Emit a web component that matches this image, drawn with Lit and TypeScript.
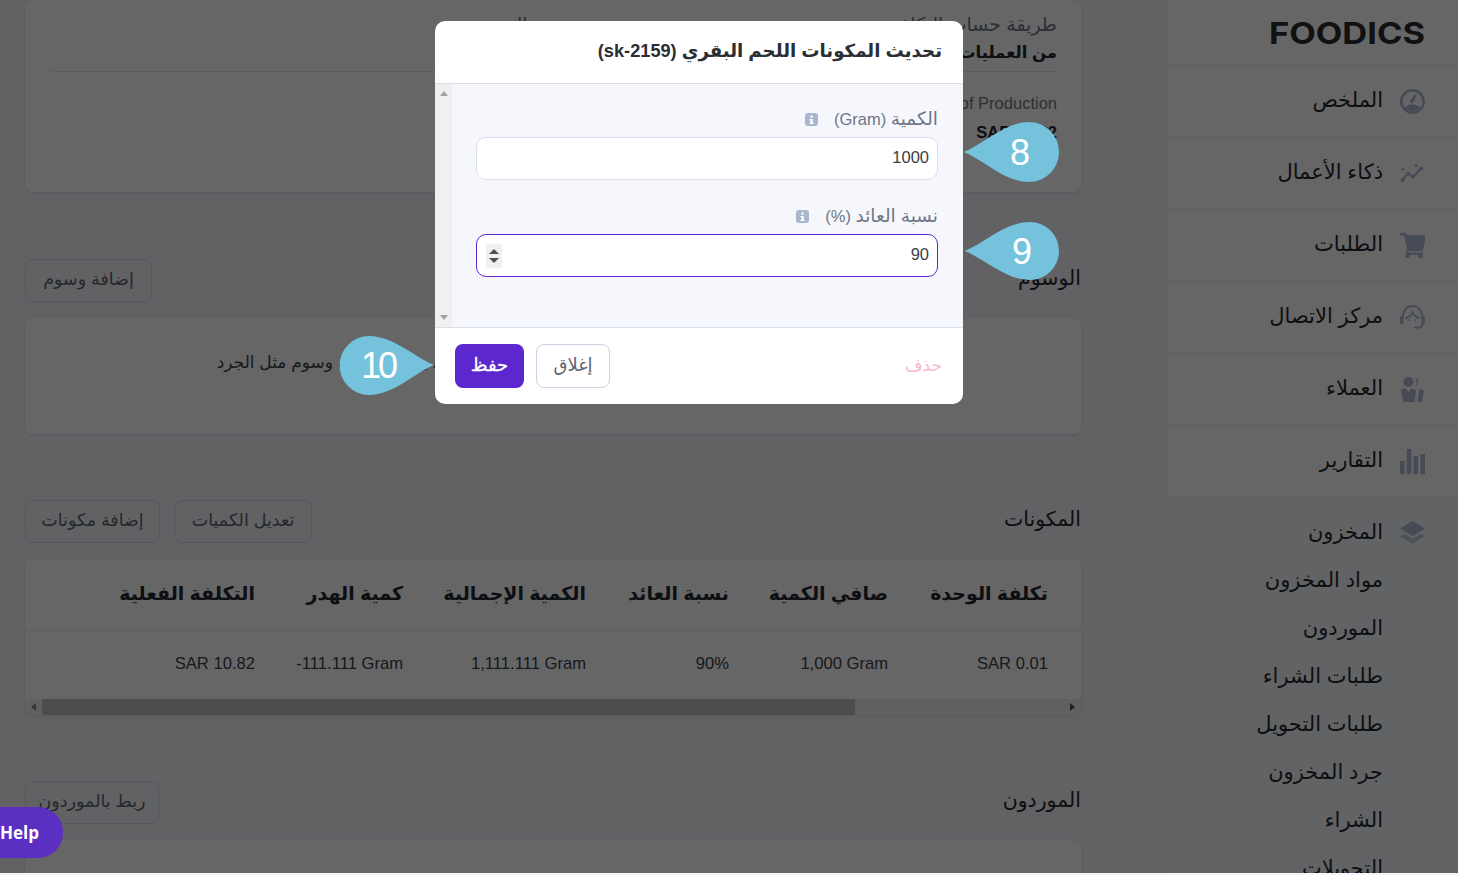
import { LitElement, html, css, svg } from 'lit';
import { customElement } from 'lit/decorators.js';

const ICONS = {
  gauge: svg`<circle cx="12.5" cy="12.5" r="11.2" fill="none" stroke="currentColor" stroke-width="2.6"/><path d="M5 18.5C8 14.5 17 14.5 20 18.5A9.5 9.5 0 0 1 5 18.5z"/><path d="M11 10.5l4.200-5 1.300.8-2.700 6a1.900 1.900 0 1 1-2.800-1.800z"/>`,
  trend: svg`<path d="M2.5 19l5.500-6.500 5 3.500 8.500-9" fill="none" stroke="currentColor" stroke-width="2.2" stroke-linecap="round" stroke-linejoin="round"/><circle cx="2.5" cy="19" r="2"/><circle cx="8" cy="12.5" r="1.8"/><circle cx="13" cy="16" r="1.8"/><circle cx="21.5" cy="7.5" r="2"/><path d="M3 6l.7 1.500 1.500.7-1.500.7L3 10.400l-.7-1.500-1.500-.7 1.500-.7zM16 2l.8 1.700 1.700.8-1.700.8-.8 1.700-.8-1.700-1.700-.8 1.700-.8z"/>`,
  cart: svg`<path d="M25 2H6.500L6 0H0v2.500h4l3.500 14.200A3 3 0 0 0 8 22h15v-2.500H8.500a.6.6 0 0 1 0-1.200H22.500l2.500-10z"/><circle cx="7.5" cy="23" r="2.2"/><circle cx="20.5" cy="23" r="2.2"/>`,
  agent: svg`<g fill="none" stroke="currentColor" stroke-width="2" stroke-linecap="round"><path d="M3 12v-1.500a9.500 9.500 0 0 1 19 0V12"/><path d="M6.500 13C9.500 12 11.500 9.500 12.500 7 13.500 9.500 15.500 12 18.500 13"/><path d="M22.500 18c0 2.800-1.800 4.500-4 4.500H15"/></g><rect x="0" y="11" width="3.5" height="8" rx="1.6"/><rect x="21.5" y="11" width="3.5" height="8" rx="1.6"/><circle cx="9.5" cy="15" r="1"/><circle cx="15.5" cy="15" r="1"/>`,
  users: svg`<circle cx="8.5" cy="5" r="5"/><path d="M15 .3a5 5 0 0 1 0 9.400a7 7 0 0 0 0-9.400z"/><path d="M1 13c1.500-1 3-1.500 4.500-1.500L8.500 15l3-3.500c1.500 0 3 .5 4.500 1.500l-1.500 12h-11z"/><path d="M18 12c2 0 4 .5 6 1.500L22 25h-4.500L19 13z"/>`,
  bars: svg`<rect x="0" y="12" width="4.5" height="13"/><rect x="6.8" y="0" width="4.5" height="25"/><rect x="13.5" y="7" width="4.5" height="18"/><rect x="20.5" y="5" width="4.5" height="20"/>`,
  layers: svg`<path d="M12.500 0L25 7.500 12.500 15 0 7.500z"/><path d="M4 12.700l8.500 5 8.500-5 4 2.500-12.500 7.500L0 15.200z" opacity=".75"/>`,
} as const;

const NAV: [string, keyof typeof ICONS][] = [
  ['الملخص', 'gauge'],
  ['ذكاء الأعمال', 'trend'],
  ['الطلبات', 'cart'],
  ['مركز الاتصال', 'agent'],
  ['العملاء', 'users'],
  ['التقارير', 'bars'],
];

const STOCK = ['مواد المخزون', 'الموردون', 'طلبات الشراء', 'طلبات التحويل', 'جرد المخزون', 'الشراء', 'التحويلات'];

const HEADS = ['تكلفة الوحدة', 'صافي الكمية', 'نسبة العائد', 'الكمية الإجمالية', 'كمية الهدر', 'التكلفة الفعلية'];
const CELLS = ['SAR 0.01', '1,000 Gram', '90%', '1,111.111 Gram', '-111.111 Gram', 'SAR 10.82'];

@customElement('app-root')
export class AppRoot extends LitElement {
  static styles = css`
    :host {
      display: block;
      position: relative;
      height: 875px;
      overflow: hidden;
      background: #f4f6fb;
      font-family: "Liberation Sans", "DejaVu Sans", sans-serif;
      color: #24272e;
    }
    .page { display: flex; height: 873px; overflow: hidden; }

    .sidebar { width: 290px; flex: none; background: #fff; }
    .logo {
      height: 65px;
      border-bottom: 1px solid #eaeaf0;
      display: flex;
      padding-right: 33px;
      align-items: center;
    }
    .nav-item {
      height: 71px;
      border-bottom: 1px solid #eaeaf0;
      display: flex;
      align-items: center;
      gap: 17px;
      padding-right: 33px;
      font-size: 21px;
    }
    .nav-item span { padding-bottom: 3px; }
    .nav-icon { width: 25px; height: 25px; flex: none; fill: #acb9d2; color: #acb9d2; }
    .stock { background: #f6f7fb; }
    .stock .nav-item { border: 0; height: 71px; }
    .sub { height: 48px; line-height: 46px; padding-right: 75px; font-size: 21px; white-space: nowrap; }
    .stock .list { margin-top: -12px; }

    .main { flex: 1; padding: 0 87px 0 25px; min-width: 0; }
    .card {
      background: #fff;
      border-radius: 8px;
      box-shadow: 0 1px 4px rgba(30, 40, 70, .12);
    }
    .info-card { height: 192px; padding: 15px 24px 0 27px; box-sizing: border-box; }
    .info-row {
      display: grid;
      grid-template-columns: 1fr 1fr;
      gap: 54px;
      height: 56px;
      border-bottom: 1px solid #e6e6ee;
    }
    .info-row + .info-row { border: 0; margin-top: 21px; }
    .info-label { font-size: 16.5px; line-height: 20px; color: #6f7687; }
    .info-label.ar { font-size: 19px; }
    .info-value { font-size: 16.5px; line-height: 20px; margin-top: 9px; font-weight: 700; color: #24272e; }
    .info-value.ar { margin-top: 7px; }
    .ltr { direction: ltr; text-align: right; }

    .section-head {
      display: flex;
      align-items: center;
      justify-content: space-between;
      height: 43px;
      margin-top: 66px;
      margin-bottom: 16px;
    }
    .section-head.first { margin-top: 67px; }
    .section-title { font-size: 20.5px; padding-bottom: 6px; }
    .head-actions { display: flex; gap: 14px; }
    .ghost {
      height: 43px;
      box-sizing: border-box;
      padding: 0 0 3px;
      border: 1px solid #d5dbe7;
      border-radius: 8px;
      background: transparent;
      font: inherit;
      font-size: 17.5px;
      color: #5d6472;
    }
    .w127 { width: 127px; }
    .w134 { width: 134px; }
    .w135 { width: 135px; }
    .w138 { width: 138px; }
    .tags { height: 116px; display: flex; justify-content: center; padding-top: 34px; box-sizing: border-box; font-size: 17px; line-height: 22px; color: #3a3f4a; white-space: nowrap; }

    .ing { height: 156px; overflow: hidden; }
    .tbl-row {
      display: grid;
      grid-template-columns: 160px 159px 143px 183px 148px 158px 1fr;
      padding-right: 33px;
      align-items: center;
    }
    .tbl-row.head { height: 72px; box-sizing: border-box; padding-bottom: 2px; border-bottom: 1px solid #e8e8ef; font-size: 19px; font-weight: 700; white-space: nowrap; }
    .tbl-row.body { height: 68px; padding-bottom: 2px; box-sizing: border-box; font-size: 16.6px; color: #3a3f4a; }
    .trash { width: 16px; height: 20px; fill: none; stroke: #ff5f70; stroke-width: 2.5; margin-right: 92px; }
    .hbar { height: 16px; display: flex; background: #f1f1f1; direction: ltr; align-items: center; }
    .hbar i { width: 0; height: 0; border-style: solid; border-color: transparent; }
    .hbar .l { margin: 0 6px 0 6px; border-width: 4px 5px 4px 0; border-right-color: #8a8a8a; }
    .hbar .r { margin: 0 6px 0 auto; border-width: 4px 0 4px 5px; border-left-color: #505050; }
    .hbar .thumb { width: 813px; height: 100%; background: #c1c1c1; }

    .overlay {
      position: absolute;
      left: 0;
      top: 0;
      right: 0;
      height: 873px;
      background: rgba(0, 0, 0, .6);
      direction: ltr;
      padding: 21px 0 0 435px;
      box-sizing: border-box;
    }
    .modal {
      position: relative;
      width: 528px;
      height: 383px;
      background: #fff;
      border-radius: 10px;
      direction: rtl;
      display: flex;
      flex-direction: column;
    }
    .modal-head {
      height: 63px;
      flex: none;
      box-sizing: border-box;
      border-bottom: 1px solid #dcdfea;
      padding: 0 21px 3px;
      display: flex;
      align-items: center;
      font-size: 18.2px;
      font-weight: 700;
      color: #2b2e35;
    }
    .modal-body { flex: 1; display: flex; background: #f5f7fc; min-height: 0; }
    .form { flex: 1; padding: 23px 25px 0 24px; }
    .vbar { width: 17px; flex: none; background: #f0f0f0; display: flex; flex-direction: column; justify-content: space-between; align-items: center; padding: 7px 0; box-sizing: border-box; }
    .vbar i { width: 0; height: 0; border-left: 4px solid transparent; border-right: 4px solid transparent; }
    .vbar .u { border-bottom: 5px solid #a3a3a3; }
    .vbar .d { border-top: 5px solid #a3a3a3; }
    .label { display: flex; align-items: center; gap: 16px; height: 24px; font-size: 16.5px; color: #6f7687; margin-bottom: 6px; }
    .label b { font-weight: 400; font-size: 18.5px; }
    .info-i { width: 13px; height: 13px; flex: none; }
    .field {
      height: 43px;
      box-sizing: border-box;
      border: 1px solid #dcdfec;
      border-radius: 10px;
      background: #fff;
      display: flex;
      align-items: center;
      justify-content: space-between;
      padding: 0 8px 2px 9px;
      font-size: 16.5px;
      color: #3b3e45;
      margin-bottom: 24px;
    }
    .field.focus { border-color: #5c27cf; }
    .spin { width: 16px; height: 24px; margin-bottom: -2px; background: #f0f0f0; display: flex; flex-direction: column; align-items: center; justify-content: center; gap: 4px; }
    .spin i { width: 0; height: 0; border-left: 5px solid transparent; border-right: 5px solid transparent; }
    .spin .u { border-bottom: 5px solid #505050; }
    .spin .d { border-top: 5px solid #505050; }

    .modal-foot {
      height: 77px;
      flex: none;
      box-sizing: border-box;
      border-top: 1px solid #dcdfea;
      padding: 0 21px 0 20px;
      display: flex;
      align-items: center;
      gap: 12px;
    }
    .del { font-size: 17px; color: #f9b6c3; margin-left: auto; padding-bottom: 1px; }
    .btn { height: 44px; box-sizing: border-box; border-radius: 8px; font: inherit; font-size: 18px; padding: 0 0 3px; }
    .btn.close { width: 74px; background: #fff; border: 1px solid #c9d3e2; color: #5d6472; }
    .btn.save { width: 69px; background: #5c27cf; border: 0; color: #fff; -webkit-text-stroke: .3px #fff; }

    .callout { position: absolute; }
    .callout text { font-family: "Liberation Sans", sans-serif; font-size: 36px; fill: #fff; text-anchor: middle; }
    .callout text.tight { letter-spacing: -3px; }

    .logo-svg { direction: ltr; }
    .logo-text { font-family: Inter, sans-serif; font-weight: 700; font-size: 30px; fill: #2c2c2c; direction: ltr; }

    .help {
      position: absolute;
      left: 0;
      top: 807px;
      width: 63px;
      height: 51px;
      box-sizing: border-box;
      background: #5b2fc2;
      border-radius: 0 25px 25px 0;
      color: #fff;
      font-family: "Open Sans", sans-serif;
      font-weight: 700;
      font-size: 17px;
      line-height: 51px;
    }
  `;

  private navIcon(name: keyof typeof ICONS) {
    return html`<svg class="nav-icon" viewBox="0 0 25 25">${ICONS[name]}</svg>`;
  }

  private infoIcon() {
    return html`<svg class="info-i" viewBox="0 0 13 13"><rect width="13" height="13" rx="3" fill="#a9b6cf"/><rect x="5.5" y="2.5" width="2.2" height="2.2" fill="#fff"/><path d="M4.500 6h3.200v3.700h1v1.300H4.500V9.700h1V7.300h-1z" fill="#fff"/></svg>`;
  }

  render() {
    return html`
      <div class="page" dir="rtl">
        <aside class="sidebar">
          <div class="logo">
            <svg class="logo-svg" width="156" height="34" viewBox="0 0 156 34">
              <text class="logo-text" x="0" y="28" textLength="156" lengthAdjust="spacingAndGlyphs">FOODICS</text>
            </svg>
          </div>
          ${NAV.map(([t, i]) => html`<div class="nav-item">${this.navIcon(i)}<span>${t}</span></div>`)}
          <div class="stock">
            <div class="nav-item">${this.navIcon('layers')}<span>المخزون</span></div>
            <div class="list">${STOCK.map(s => html`<div class="sub">${s}</div>`)}</div>
          </div>
        </aside>

        <main class="main">
          <div class="card info-card">
            <div class="info-row">
              <div><div class="info-label ar">طريقة حساب التكلفة</div><div class="info-value ar">من العمليات</div></div>
              <div><div class="info-label ar">التصنيف</div></div>
            </div>
            <div class="info-row">
              <div><div class="info-label ltr">Cost of Production</div><div class="info-value ltr">SAR 10.82</div></div>
              <div></div>
            </div>
          </div>

          <div class="section-head first">
            <div class="section-title">الوسوم</div>
            <button class="ghost w127">إضافة وسوم</button>
          </div>
          <div class="card tags">أضف هنا إلى هذا العنصر ما يناسبه لتسهيل البحث عنه في التقارير، يمكنك إضافة وسوم مثل الجرد</div>

          <div class="section-head">
            <div class="section-title">المكونات</div>
            <div class="head-actions">
              <button class="ghost w138">تعديل الكميات</button>
              <button class="ghost w135">إضافة مكونات</button>
            </div>
          </div>
          <div class="card ing">
            <div class="tbl-row head">${HEADS.map(h => html`<div>${h}</div>`)}</div>
            <div class="tbl-row body">
              ${CELLS.map(c => html`<div class="ltr">${c}</div>`)}
              <svg class="trash" viewBox="0 0 16 20"><path d="M0 5h16M5 4V1.500h6V4M3 5v13.500h10V5" /></svg>
            </div>
            <div class="hbar"><i class="l"></i><div class="thumb"></div><i class="r"></i></div>
          </div>

          <div class="section-head">
            <div class="section-title">الموردون</div>
            <button class="ghost w134">ربط بالموردون</button>
          </div>
          <div class="card" style="height:60px"></div>
        </main>
      </div>

      <div class="overlay">
        <div class="modal">
          <div class="modal-head">تحديث المكونات اللحم البقري (sk-2159)</div>
          <div class="modal-body">
            <div class="form">
              <div class="label"><span><b>الكمية</b> (Gram)</span>${this.infoIcon()}</div>
              <div class="field"><span>1000</span></div>
              <div class="label"><span><b>نسبة العائد</b> (%)</span>${this.infoIcon()}</div>
              <div class="field focus"><span>90</span><span class="spin"><i class="u"></i><i class="d"></i></span></div>
            </div>
            <div class="vbar"><i class="u"></i><i class="d"></i></div>
          </div>
          <div class="modal-foot">
            <span class="del">حذف</span>
            <button class="btn close">إغلاق</button>
            <button class="btn save">حفظ</button>
          </div>
        </div>
      </div>

      <svg class="callout" style="left:960px;top:118px" width="104" height="68" viewBox="960 118 104 68">
        <path d="M964 152C985 143 1005 122 1029 122A30 30 0 0 1 1029 182C1005 182 985 161 964 152Z" fill="#75c2dd"/>
        <text x="1020" y="165">8</text>
      </svg>
      <svg class="callout" style="left:960px;top:218px" width="104" height="68" viewBox="960 218 104 68">
        <path d="M965 251C986 242 1006 222 1030 222A29 29 0 0 1 1030 280C1006 280 986 260 965 251Z" fill="#75c2dd"/>
        <text x="1022" y="264">9</text>
      </svg>
      <svg class="callout" style="left:335px;top:332px" width="104" height="68" viewBox="335 332 104 68">
        <path d="M434 365C413 356 393 336 369 336A29.5 29.5 0 0 0 369 395C393 395 413 374 434 365Z" fill="#75c2dd"/>
        <text class="tight" x="378" y="378">10</text>
      </svg>

      <div class="help">Help</div>
    `;
  }
}
